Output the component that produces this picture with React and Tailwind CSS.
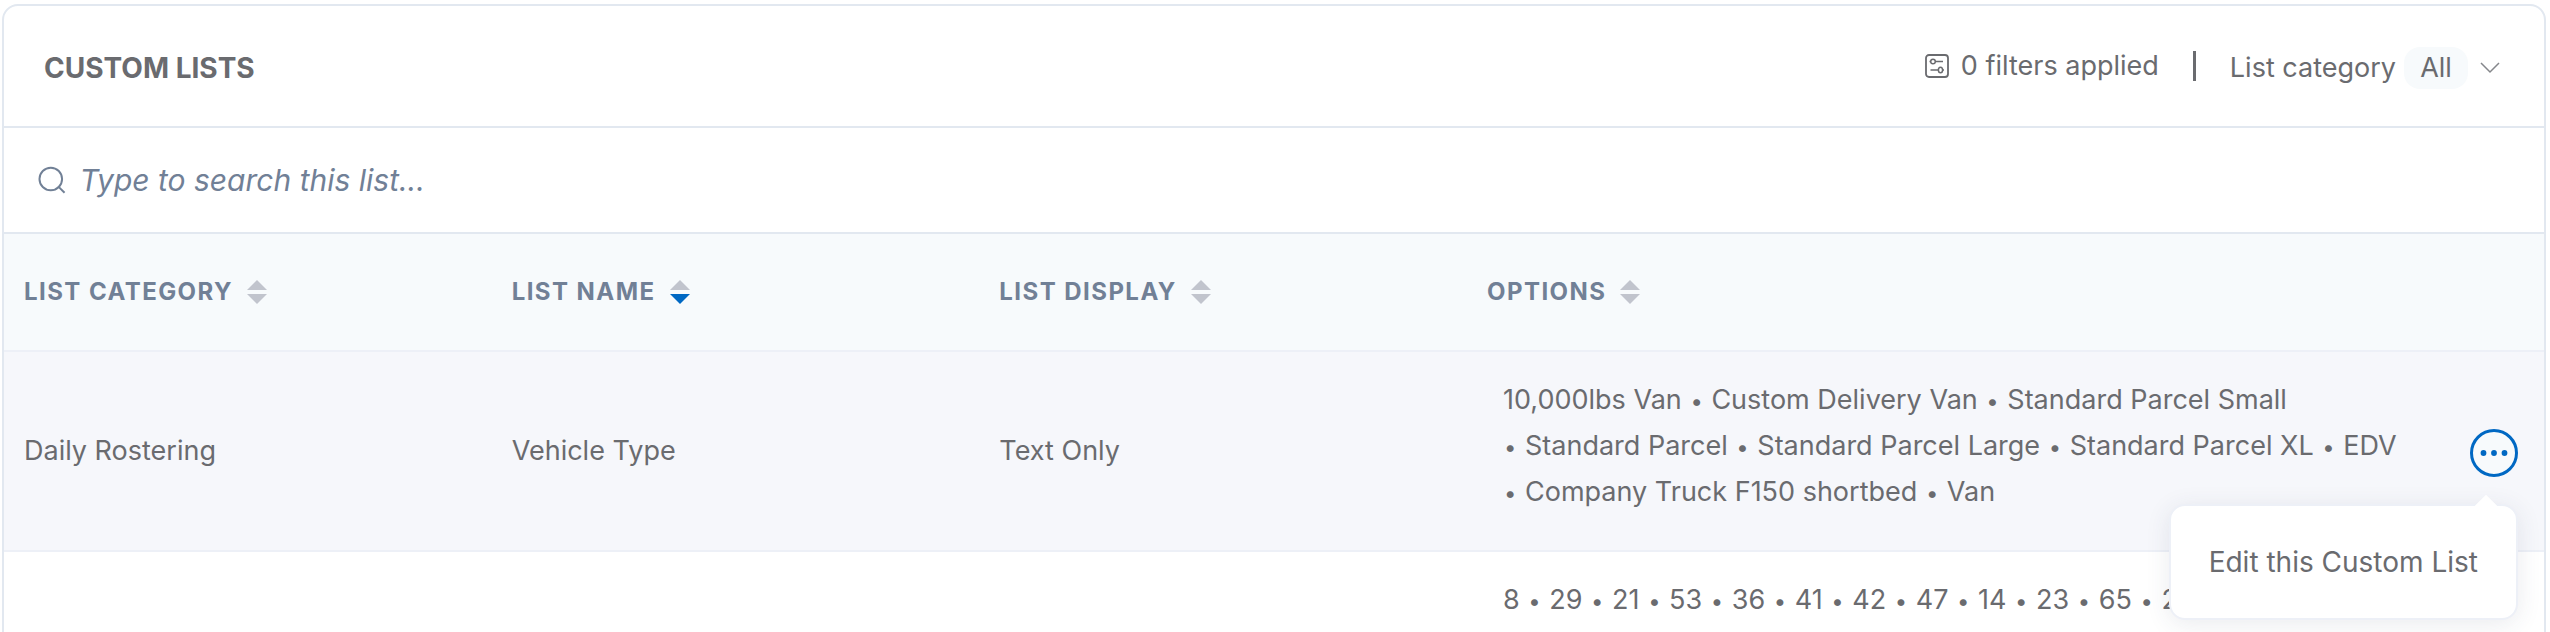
import React, { useState } from 'react';

const columns = [
  { key: 'category', label: 'List Category' },
  { key: 'name', label: 'List Name' },
  { key: 'display', label: 'List Display' },
  { key: 'options', label: 'Options' },
];

const lists = [
  {
    id: 1,
    category: 'Daily Rostering',
    name: 'Vehicle Type',
    display: 'Text Only',
    options: [
      '10,000lbs Van',
      'Custom Delivery Van',
      'Standard Parcel Small',
      'Standard Parcel',
      'Standard Parcel Large',
      'Standard Parcel XL',
      'EDV',
      'Company Truck F150 shortbed',
      'Van',
    ],
  },
  {
    id: 2,
    category: '',
    name: '',
    display: '',
    options: ['8', '29', '21', '53', '36', '41', '42', '47', '14', '23', '65', '2'],
  },
];

/* ----------  Icons  ---------- */
function FilterIcon() {
  return (
    <svg width="24" height="24" viewBox="0 0 24 24" fill="none" stroke="#6a6b6f" aria-hidden="true">
      <rect x="1" y="1" width="22" height="22" rx="3" strokeWidth="1.8" />
      <circle cx="8" cy="7.5" r="2.3" strokeWidth="1.5" />
      <path d="M4.5 7.5h1.2M10.3 7.5H18" strokeWidth="1.5" />
      <ellipse cx="15.5" cy="16" rx="2.1" ry="2.8" strokeWidth="1.5" />
      <path d="M5.5 16h7.9M17.6 16h1.4" strokeWidth="1.5" />
    </svg>
  );
}

function SearchIcon() {
  return (
    <svg width="28" height="28" viewBox="0 0 28 28" fill="none" stroke="#718096" strokeWidth="2" aria-hidden="true">
      <circle cx="13" cy="13" r="11.5" />
      <path d="M20.5 20.5L27 27" />
    </svg>
  );
}

function SortIcon({ active }) {
  return (
    <svg width="20" height="24" viewBox="0 0 20 24" aria-hidden="true">
      <path d="M10 0L20 10H0z" fill="#c1c4cd" />
      <path d="M0 14H20L10 24z" fill={active ? '#0068c3' : '#c1c4cd'} />
    </svg>
  );
}

function DotsIcon() {
  return (
    <svg width="28" height="8" viewBox="0 0 28 8" fill="#0068c3" aria-hidden="true">
      <circle cx="3.5" cy="4" r="2.9" />
      <circle cx="14" cy="4" r="2.9" />
      <circle cx="24.5" cy="4" r="2.9" />
    </svg>
  );
}

/* ----------  Page  ---------- */
export default function App() {
  const [sortKey, setSortKey] = useState('name');
  const [openRow, setOpenRow] = useState(1);

  return (
    <div className="h-screen overflow-hidden bg-white pt-1 pl-0.5 pr-1 font-['Inter',sans-serif] text-[27px] text-[#6a6b6f]">
      <div className="min-h-screen rounded-t-2xl border-2 border-[#e2e8f0]">
        {/* title bar */}
        <header className="flex h-[122px] items-center justify-between border-b-2 border-[#e2e8f0] pt-1 pl-10 pr-11">
          <h1 className="text-[28px] font-bold uppercase">Custom Lists</h1>
          <div className="flex items-center">
            <button className="mb-1 flex items-center gap-3">
              <FilterIcon />
              0 filters applied
            </button>
            <span className="mx-[34px] mb-1 h-[30px] w-[3px] bg-[#6a6b6f]" />
            <label htmlFor="list-category" className="mr-2">
              List category
            </label>
            <select
              id="list-category"
              className="h-[42px] w-16 appearance-none rounded-2xl bg-[#f7fafc] text-center"
            >
              <option>All</option>
            </select>
            <svg className="ml-3" width="20" height="12" viewBox="0 0 20 12" fill="none" stroke="#85878b" strokeWidth="1.5" aria-hidden="true">
              <path d="M1 1l9 9 9-9" />
            </svg>
          </div>
        </header>

        {/* search */}
        <div className="flex h-[106px] items-center gap-3.5 border-b-2 border-[#e2e8f0] px-[34px]">
          <SearchIcon />
          <input
            type="text"
            aria-label="Search this list"
            placeholder="Type to search this list..."
            className="w-full text-[30px] italic outline-none placeholder:text-[#718096]"
          />
        </div>

        {/* lists */}
        <table className="w-full table-fixed">
          <thead>
            <tr className="h-[117px] border-b-2 border-[#edf0f7] bg-[#f7fafc]">
              {columns.map((col) => (
                <th
                  key={col.key}
                  className={
                    col.key === 'options'
                      ? 'pl-5 text-left'
                      : 'w-[19.2%] pl-5 text-left'
                  }
                >
                  <button
                    onClick={() => setSortKey(col.key)}
                    className="flex items-center gap-3.5 text-[24px] font-bold uppercase tracking-[0.06em] text-[#718096]"
                  >
                    {col.label}
                    <SortIcon active={sortKey === col.key} />
                  </button>
                </th>
              ))}
              <th className="w-[110px]" aria-label="Actions" />
            </tr>
          </thead>
          <tbody>
            {lists.map((list) => (
              <tr
                key={list.id}
                className={
                  openRow === list.id
                    ? 'border-b-2 border-[#edf0f7] bg-[#f6f7fb]'
                    : 'border-b-2 border-[#edf0f7]'
                }
              >
                <td className="pl-5">{list.category}</td>
                <td className="pl-5">{list.name}</td>
                <td className="pl-5">{list.display}</td>
                <td className="pt-[25px] pb-[35px] pl-9 leading-[46px]">
                  {list.options.map((option, i) => (
                    <React.Fragment key={option}>
                      <span className="inline-block">
                        {i > 0 && (
                          <>
                            <span className="mx-px text-[22px] leading-none">•</span>{' '}
                          </>
                        )}
                        {option}
                      </span>{' '}
                    </React.Fragment>
                  ))}
                </td>
                <td className="relative pt-1 pr-[26px]">
                  {openRow === list.id && (
                    <>
                      <button
                        aria-label="List actions"
                        onClick={() => setOpenRow(null)}
                        className="ml-auto flex size-12 items-center justify-center rounded-full border-3 border-[#0068c3] bg-[#f7fafc]"
                      >
                        <DotsIcon />
                      </button>
                      <div className="absolute top-[152px] right-[26px] z-10 rounded-2xl border-2 border-[#edf0f7] bg-white text-[28px] shadow-[0_4px_24px_rgba(45,55,90,0.1)]">
                        <span className="absolute -top-2 right-[22px] size-4 rotate-45 bg-white" />
                        <button className="relative px-[38px] py-[35px] leading-[42px] whitespace-nowrap">
                          Edit this Custom List
                        </button>
                      </div>
                    </>
                  )}
                </td>
              </tr>
            ))}
          </tbody>
        </table>
      </div>
    </div>
  );
}
